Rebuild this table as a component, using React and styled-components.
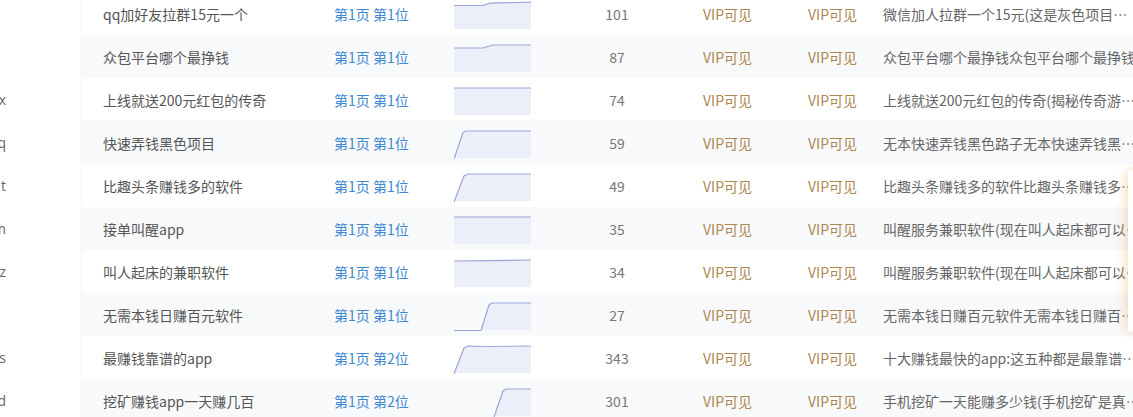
import React from 'react';
import styled, { createGlobalStyle } from 'styled-components';

const GlobalStyle = createGlobalStyle`
  html, body {
    margin: 0;
    padding: 0;
    background: #fff;
    overflow: hidden;
  }
  body {
    font-family: "Microsoft YaHei", "Noto Sans CJK SC", "Noto Sans", sans-serif;
    font-size: 14px;
  }
`;

const Page = styled.div`
  display: flex;
  width: 1133px;
  height: 417px;
  overflow: hidden;
  position: relative;
`;

const Sidebar = styled.div`
  flex: 0 0 82px;
  overflow: hidden;
  margin-top: -8px;
`;

const SideItem = styled.div`
  height: 43px;
  line-height: 43px;
  width: 128px;
  margin-left: -122px;
  text-align: right;
  white-space: nowrap;
  color: #666;
  font-family: "Open Sans", "Noto Sans", sans-serif;
  font-size: 14px;
`;

const Table = styled.div`
  flex: 0 0 auto;
  margin-top: -8px;
  border-left: 1px solid #f3f4f7;
  margin-left: -1px;
`;

const Row = styled.div`
  display: grid;
  grid-template-columns: 232px 120px 117px 132px 105px 75px 290px;
  height: 43px;
  align-items: center;
  background: ${props => props.striped ? '#f8f9fb' : '#fff'};
`;

const Cell = styled.div`
  padding: 1px ${props => props.padRight ?? 20}px 0 ${props => props.pad || 20}px;
  white-space: nowrap;
  overflow: hidden;
  text-overflow: ellipsis;
  color: ${props => props.color || '#555'};
  text-align: ${props => props.center ? 'center' : 'left'};
`;

const ChartCell = styled.div`
  padding-left: 20px;
  display: flex;
  align-items: flex-start;
  align-self: start;
  padding-top: 8px;
`;

const FloatPanel = styled.div`
  position: absolute;
  left: 1128px;
  top: 170px;
  width: 60px;
  height: 162px;
  background: #fff;
  border-radius: 4px;
  box-shadow: -3px 0 10px rgba(235, 170, 80, 0.35);
`;

const W = 77;
const H = 30;

function Sparkline({ pts }) {
  const line = pts.map((p, i) => `${i ? 'L' : 'M'}${p[0]},${p[1]}`).join(' ');
  const area = `${line} L${W},${H - 1} L${pts[0][0]},${H - 1} Z`;
  return (
    <svg width={W} height={H} viewBox={`0 0 ${W} ${H}`}>
      <path d={area} fill="#eceefa" />
      <path d={line} fill="none" stroke="#9ea5d8" strokeWidth="1.2" />
    </svg>
  );
}

const rows = [
  { side: '', name: 'qq加好友拉群15元一个', page: '第1页 第1位', num: 101, desc: '微信加人拉群一个15元(这是灰色项目大家都知道)', pts: [[0, 5.5], [29, 5.5], [36, 3.2], [77, 2.2]] },
  { side: '', name: '众包平台哪个最挣钱', page: '第1页 第1位', num: 87, desc: '众包平台哪个最挣钱众包平台哪个最挣钱', pts: [[0, 5], [29, 5], [39, 2], [77, 2]] },
  { side: 'x', name: '上线就送200元红包的传奇', page: '第1页 第1位', num: 74, desc: '上线就送200元红包的传奇(揭秘传奇游戏的套路)', pts: [[0, 2], [77, 2]] },
  { side: 'q', name: '快速弄钱黑色项目', page: '第1页 第1位', num: 59, desc: '无本快速弄钱黑色路子无本快速弄钱黑色路子', pts: [[0, 30], [9, 3.5], [12, 2], [77, 2]] },
  { side: 't', name: '比趣头条赚钱多的软件', page: '第1页 第1位', num: 49, desc: '比趣头条赚钱多的软件比趣头条赚钱多的软件', pts: [[0, 30], [10, 4], [14, 2], [77, 2]] },
  { side: 'm', name: '接单叫醒app', page: '第1页 第1位', num: 35, desc: '叫醒服务兼职软件(现在叫人起床都可以赚钱了)', pts: [[0, 2], [77, 2]] },
  { side: 'z', name: '叫人起床的兼职软件', page: '第1页 第1位', num: 34, desc: '叫醒服务兼职软件(现在叫人起床都可以赚钱了)', pts: [[0, 3], [34, 2.6], [77, 2]] },
  { side: '', name: '无需本钱日赚百元软件', page: '第1页 第1位', num: 27, desc: '无需本钱日赚百元软件无需本钱日赚百元软件', pts: [[0, 29.5], [27, 29.5], [35, 4], [38, 2], [77, 2]] },
  { side: 's', name: '最赚钱靠谱的app', page: '第1页 第2位', num: 343, desc: '十大赚钱最快的app:这五种都是最靠谱的赚钱软件', pts: [[0, 30], [10, 4], [14, 2], [34, 2.5], [77, 2]] },
  { side: 'd', name: '挖矿赚钱app一天赚几百', page: '第1页 第2位', num: 301, desc: '手机挖矿一天能赚多少钱(手机挖矿是真的吗)', pts: [[40, 30], [49, 4], [52, 2], [77, 2]] },
];

export default function App() {
  return (
    <Page>
      <GlobalStyle />
      <Sidebar>
        {rows.map((r, i) => (
          <SideItem key={i}>{r.side}</SideItem>
        ))}
      </Sidebar>
      <Table>
        {rows.map((r, i) => (
          <Row key={i} striped={i % 2 === 1}>
            <Cell pad={21}>{r.name}</Cell>
            <Cell color="#3f88d3">{r.page}</Cell>
            <ChartCell>
              <Sparkline pts={r.pts} />
            </ChartCell>
            <Cell center color="#777">{r.num}</Cell>
            <Cell color="#ad874f" padRight={0}>VIP可见</Cell>
            <Cell color="#ad874f" padRight={0}>VIP可见</Cell>
            <Cell color="#666" padRight={12}>{r.desc}</Cell>
          </Row>
        ))}
      </Table>
      <FloatPanel />
    </Page>
  );
}
